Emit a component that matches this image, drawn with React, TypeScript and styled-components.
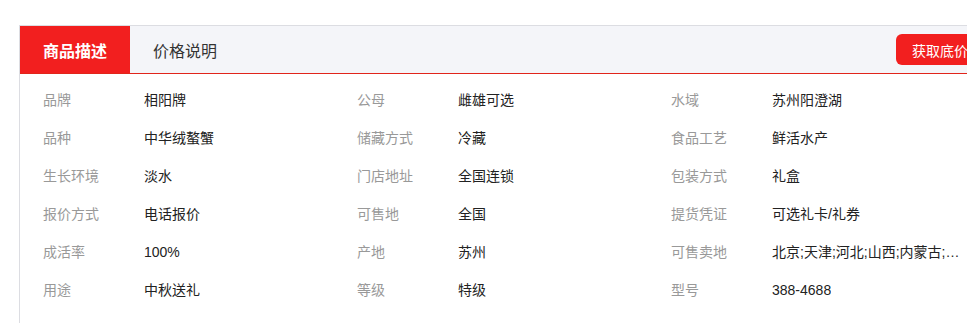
import * as React from 'react';
import styled, { createGlobalStyle } from 'styled-components';

const GlobalStyle = createGlobalStyle`
  html, body {
    margin: 0;
    padding: 0;
    background: #fff;
    overflow: hidden;
  }
  body {
    font-family: 'Liberation Sans', 'Noto Sans CJK SC', sans-serif;
    font-size: 14px;
    color: #333;
  }
`;

type Spec = { label: string; value: string };

const specs: Spec[][] = [
  [
    { label: '品牌', value: '相阳牌' },
    { label: '公母', value: '雌雄可选' },
    { label: '水域', value: '苏州阳澄湖' },
  ],
  [
    { label: '品种', value: '中华绒螯蟹' },
    { label: '储藏方式', value: '冷藏' },
    { label: '食品工艺', value: '鲜活水产' },
  ],
  [
    { label: '生长环境', value: '淡水' },
    { label: '门店地址', value: '全国连锁' },
    { label: '包装方式', value: '礼盒' },
  ],
  [
    { label: '报价方式', value: '电话报价' },
    { label: '可售地', value: '全国' },
    { label: '提货凭证', value: '可选礼卡/礼券' },
  ],
  [
    { label: '成活率', value: '100%' },
    { label: '产地', value: '苏州' },
    { label: '可售卖地', value: '北京;天津;河北;山西;内蒙古;辽宁;吉林;黑龙江' },
  ],
  [
    { label: '用途', value: '中秋送礼' },
    { label: '等级', value: '特级' },
    { label: '型号', value: '388-4688' },
  ],
];

export default function App() {
  return (
    <Page>
      <GlobalStyle />
      <Panel>
        <TabBar>
          <Tabs>
            <Tab active>商品描述</Tab>
            <Tab>价格说明</Tab>
          </Tabs>
          <PriceButton>获取底价</PriceButton>
        </TabBar>
        <SpecGrid>
          {specs.flat().map((s) => (
            <SpecCell key={s.label}>
              <SpecLabel>{s.label}</SpecLabel>
              <SpecValue>{s.value}</SpecValue>
            </SpecCell>
          ))}
        </SpecGrid>
      </Panel>
    </Page>
  );
}

const Page = styled.div`
  padding: 25px 0 0 19px;
  width: 1100px;
`;

const Panel = styled.div`
  width: 1000px;
  border: 1px solid #dcdde2;
  border-bottom: none;
  min-height: 300px;
`;

const TabBar = styled.div`
  display: flex;
  align-items: center;
  justify-content: space-between;
  height: 47px;
  background: #f4f5f9;
  border-bottom: 1px solid #e1251b;
`;

const Tabs = styled.div`
  display: flex;
  height: 100%;
`;

const Tab = styled.div<{ active?: boolean }>`
  display: flex;
  align-items: center;
  justify-content: center;
  width: 110px;
  height: 100%;
  font-size: 16px;
  font-weight: ${(p) => (p.active ? 'bold' : 'normal')};
  color: ${(p) => (p.active ? '#fff' : '#333')};
  background: ${(p) => (p.active ? '#f21f1f' : 'transparent')};
`;

const PriceButton = styled.button`
  height: 31px;
  padding: 0 16px;
  margin-right: 36px;
  border: none;
  border-radius: 6px;
  background: #f21f1f;
  color: #fff;
  font-family: inherit;
  font-size: 14px;
  cursor: pointer;
`;

const SpecGrid = styled.div`
  display: grid;
  grid-template-columns: repeat(3, 314px);
  padding: 7px 0 6px 23px;
`;

const SpecCell = styled.div`
  display: flex;
  height: 38px;
  line-height: 38px;
`;

const SpecLabel = styled.span`
  flex: 0 0 101px;
  color: #999;
`;

const SpecValue = styled.span`
  max-width: 195px;
  color: #222;
  white-space: nowrap;
  overflow: hidden;
  text-overflow: ellipsis;
`;
